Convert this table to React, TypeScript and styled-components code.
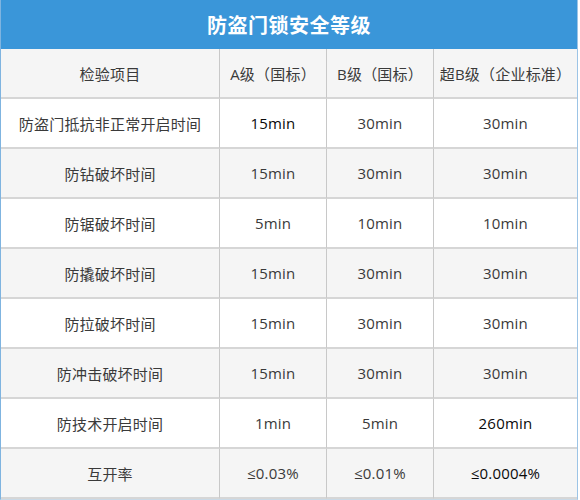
import styled, { createGlobalStyle } from 'styled-components';

const GlobalStyle = createGlobalStyle`
  html, body {
    margin: 0;
    padding: 0;
    background: #ffffff;
  }
  body {
    font-family: 'Open Sans', 'Noto Sans CJK SC', sans-serif;
  }
`;

const Frame = styled.div`
  width: 578px;
  height: 500px;
  box-sizing: border-box;
  border-left: 1px solid #7fb4e0;
  border-right: 1px solid #9cc4e6;
  border-bottom: 1px solid #c9d9e6;
  display: flex;
  flex-direction: column;
`;

const Title = styled.div`
  height: 50px;
  background: #3a96d9;
  color: #ffffff;
  font-size: 20px;
  font-weight: 700;
  font-family: 'Noto Sans CJK SC', sans-serif;
  display: flex;
  align-items: center;
  justify-content: center;
  letter-spacing: 0.5px;
`;

const Grid = styled.div`
  display: grid;
  grid-template-columns: 219px 107px 107px 1fr;
  grid-auto-rows: 50px;
`;

interface CellProps {
  $shade: boolean;
  $last: boolean;
  $strong?: boolean;
}

const Cell = styled.div<CellProps>`
  background: ${(p) => (p.$shade ? '#f5f5f5' : '#ffffff')};
  border-bottom: 2px solid #d6d6d6;
  border-right: ${(p) => (p.$last ? 'none' : '1px solid #c8c8c8')};
  display: flex;
  align-items: center;
  justify-content: center;
  font-size: 15px;
  color: ${(p) => (p.$strong ? '#0a0a0a' : '#3a3a3a')};
  font-weight: ${(p) => (p.$strong ? 500 : 400)};
  font-family: 'Open Sans', 'Noto Sans CJK SC', sans-serif;
  white-space: nowrap;
  letter-spacing: 0.2px;
`;

const rows: string[][] = [
  ['检验项目', 'A级（国标）', 'B级（国标）', '超B级（企业标准）'],
  ['防盗门抵抗非正常开启时间', '15min', '30min', '30min'],
  ['防钻破坏时间', '15min', '30min', '30min'],
  ['防锯破坏时间', '5min', '10min', '10min'],
  ['防撬破坏时间', '15min', '30min', '30min'],
  ['防拉破坏时间', '15min', '30min', '30min'],
  ['防冲击破坏时间', '15min', '30min', '30min'],
  ['防技术开启时间', '1min', '5min', '260min'],
  ['互开率', '≤0.03%', '≤0.01%', '≤0.0004%'],
];

const strong = new Set(['1-1', '7-3', '8-3']);

export default function App() {
  return (
    <>
      <GlobalStyle />
      <Frame>
        <Title>防盗门锁安全等级</Title>
        <Grid>
          {rows.map((row, r) =>
            row.map((text, c) => (
              <Cell
                key={`${r}-${c}`}
                $shade={r % 2 === 0}
                $last={c === 3}
                $strong={strong.has(`${r}-${c}`)}
              >
                {text}
              </Cell>
            ))
          )}
        </Grid>
      </Frame>
    </>
  );
}
